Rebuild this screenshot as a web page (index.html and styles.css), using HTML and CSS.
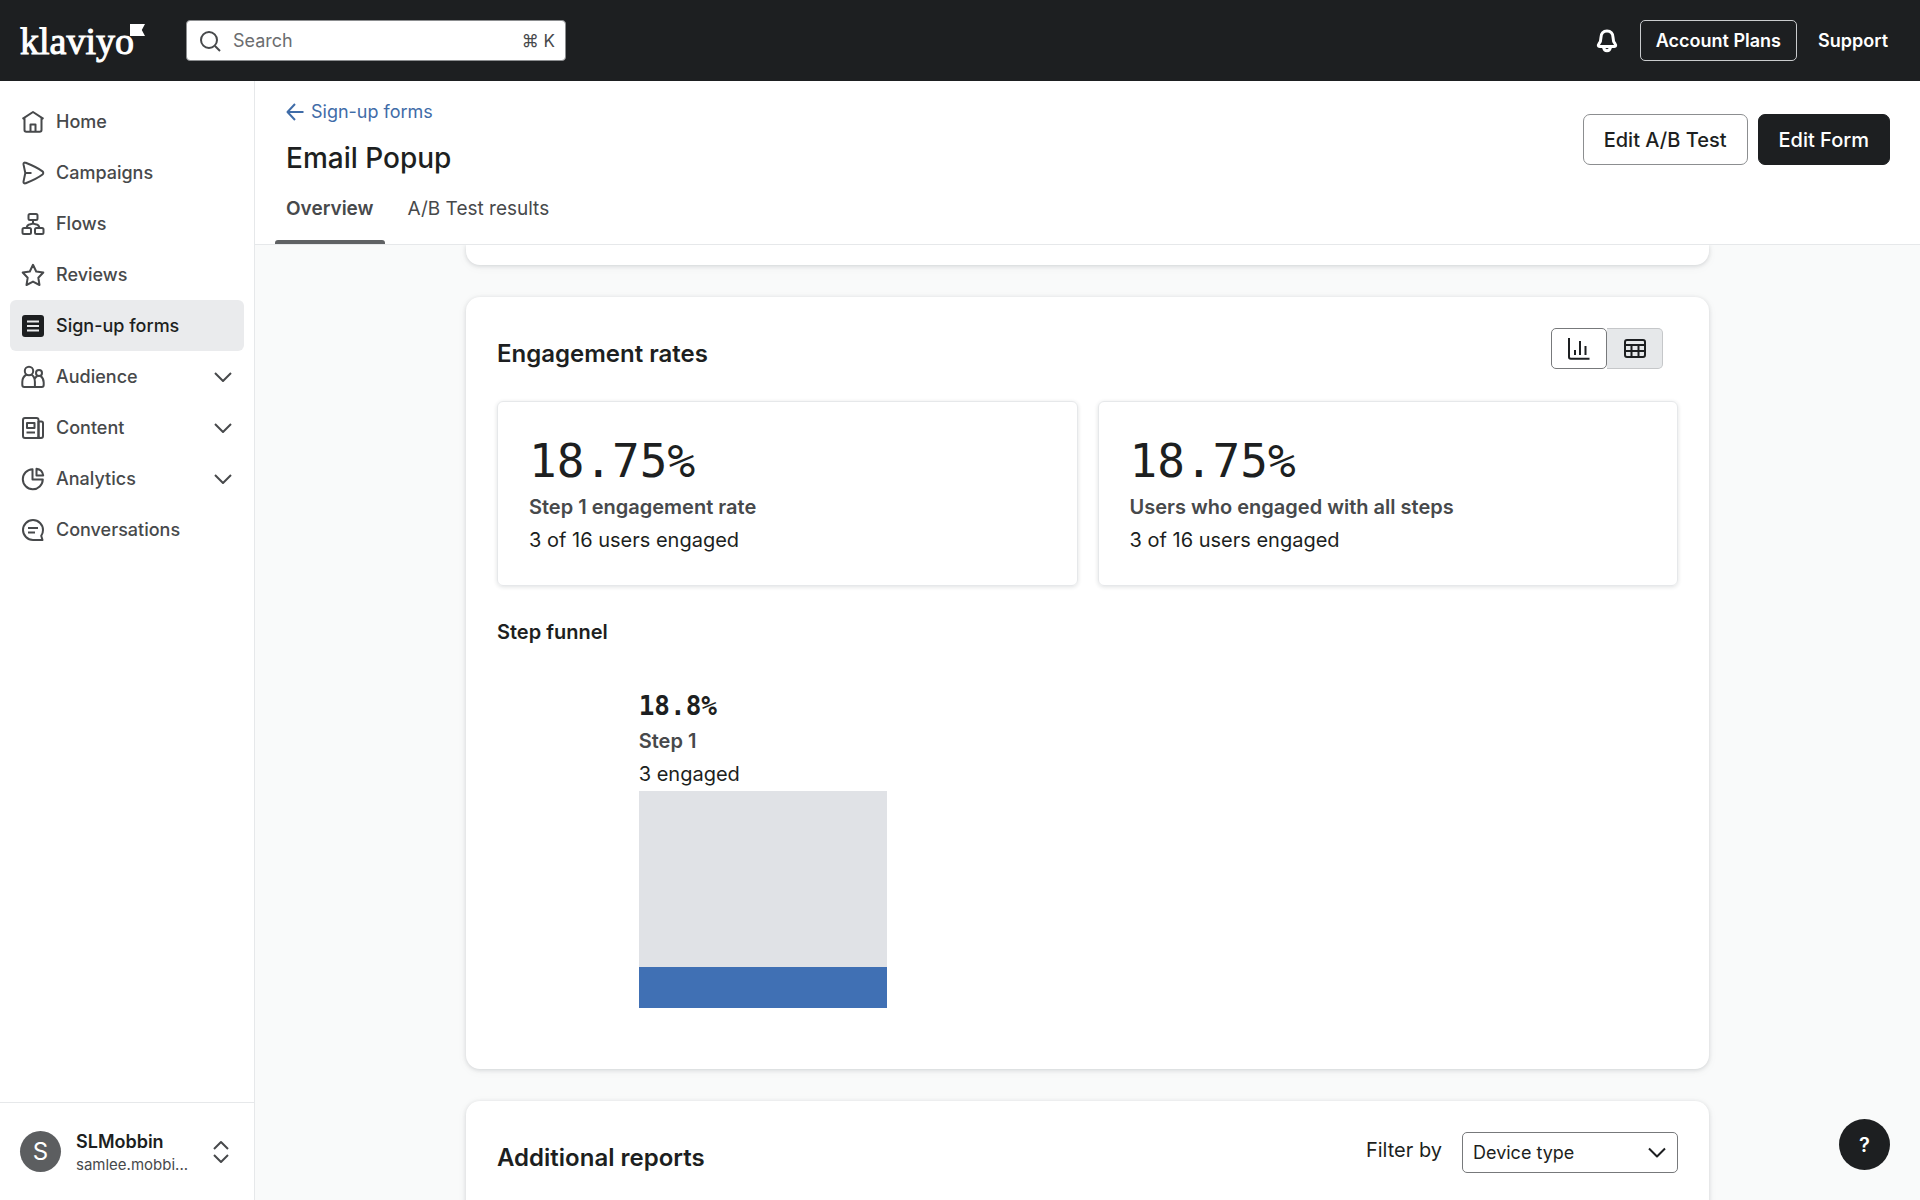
FILE: index.html
```html
<!DOCTYPE html>
<html lang="en">
<head>
  <meta charset="UTF-8">
  <meta name="viewport" content="width=device-width, initial-scale=1">
  <title>Email Popup - Sign-up forms</title>
  <link rel="stylesheet" href="styles.css">
</head>
<body>
  <header class="topbar">
    <a href="#" class="logo">klaviyo<svg class="logo-flag" width="15" height="12" viewBox="0 0 15 12"><path d="M0 0h15l-3.200 6 3.200 6H0z" fill="currentColor"/></svg></a>
    <label class="search">
      <svg width="24" height="24" viewBox="0 0 24 24" class="icon"><circle cx="10" cy="11" r="8"/><path d="M16 17l5 5"/></svg>
      <input type="text" placeholder="Search" aria-label="Search">
      <span class="shortcut">⌘ K</span>
    </label>
    <div class="topbar-actions">
      <button class="bell" aria-label="Notifications">
        <svg width="24" height="24" viewBox="0 0 24 24" class="icon"><path d="M12 2c-3.800 0-6 2.700-6 6.200 0 4-.8 5.300-2.200 6.900-.9 1.100-.5 2.400.8 2.400h14.800c1.300 0 1.700-1.300.8-2.400-1.400-1.600-2.200-2.900-2.200-6.900C18 4.700 15.800 2 12 2z"/><path d="M8.500 18c.3 2.400 1.600 3.800 3.500 3.800s3.200-1.400 3.500-3.800"/></svg>
      </button>
      <button class="plans">Account Plans</button>
      <a href="#" class="support">Support</a>
    </div>
  </header>

  <div class="layout">
    <aside class="sidebar">
      <nav>
        <a href="#" class="nav-item">
          <svg width="24" height="24" viewBox="0 0 24 24" class="icon"><path d="M1.500 8.800L12 2l10.500 6.800M3.500 8v12c0 1.100.7 1.800 1.800 1.800h13.400c1.100 0 1.800-.7 1.800-1.800V8M9.500 21.500v-7h5v7"/></svg>
          <span>Home</span>
        </a>
        <a href="#" class="nav-item">
          <svg width="24" height="24" viewBox="0 0 24 24" class="icon"><path d="M2.500 3.400c-.2-1.300 1-2.200 2.200-1.600 6.100 2.400 12 5 16.800 8.600 1 .8 1 2.300 0 3.100-4.800 3.700-10.700 6.300-16.800 8.700-1.200.6-2.400-.3-2.200-1.600L4.300 12zM4.300 12h6.200"/></svg>
          <span>Campaigns</span>
        </a>
        <a href="#" class="nav-item">
          <svg width="24" height="24" viewBox="0 0 24 24" class="icon"><rect x="7.500" y="2" width="9" height="6" rx="1.500"/><rect x="1.500" y="16" width="8.500" height="6" rx="1.500"/><rect x="14" y="16" width="8.500" height="6" rx="1.500"/><path d="M12 8v2.500M5.700 16c0-5.500 6.300-2.500 6.300-5.500 0 3 6.300 0 6.300 5.500"/></svg>
          <span>Flows</span>
        </a>
        <a href="#" class="nav-item">
          <svg width="24" height="24" viewBox="0 0 24 24" class="icon"><path d="M12 1.800l3.200 6.700 7.100 1-5 5.200 1.200 7.300-6.500-3.400L5.500 22l1.200-7.300-5-5.200 7.100-1z"/></svg>
          <span>Reviews</span>
        </a>
        <a href="#" class="nav-item active">
          <svg width="24" height="24" viewBox="0 0 24 24"><rect x="1" y="1" width="22" height="22" rx="3" fill="#1d1f21"/><path d="M6 7.500h12M6 12h12M6 16.500h12" stroke="#eaebed" stroke-width="2"/></svg>
          <span>Sign-up forms</span>
        </a>
        <a href="#" class="nav-item">
          <svg width="24" height="24" viewBox="0 0 24 24" class="icon"><circle cx="8" cy="6" r="4.200"/><circle cx="18" cy="8" r="3"/><path d="M5.600 9.500C2.800 11 1.300 13.500 1.300 17v3c0 1.200.8 2 2 2h17.400c1.200 0 2-.8 2-2v-2.500c0-2.800-1-5-3.200-6.600M10.400 9.500c2.500 1.600 3.500 4 3.500 7.500v5M16.400 10.900c-1.300.8-2.200 1.800-2.700 2.900"/></svg>
          <span>Audience</span>
          <svg width="18" height="10" viewBox="0 0 18 10" class="icon chevron"><path d="M1 1l8 8 8-8"/></svg>
        </a>
        <a href="#" class="nav-item">
          <svg width="24" height="24" viewBox="0 0 24 24" class="icon"><rect x="2" y="2" width="15.500" height="20" rx="2"/><path d="M17.500 5.500h2.800c1 0 1.700.7 1.700 1.700V20c0 1.200-.8 2-2 2h-4M17.500 5v15c0 1.200.8 2 2 2"/><path d="M6 7h7.500v5H6zM5.500 16.500h8.500"/></svg>
          <span>Content</span>
          <svg width="18" height="10" viewBox="0 0 18 10" class="icon chevron"><path d="M1 1l8 8 8-8"/></svg>
        </a>
        <a href="#" class="nav-item">
          <svg width="24" height="24" viewBox="0 0 24 24" class="icon"><path d="M11.500 2.200A10 10 0 1 0 21.800 12.500H11.500z"/><path d="M15.500 1.800c3.600.5 6.200 3.100 6.700 6.700h-6.700z"/></svg>
          <span>Analytics</span>
          <svg width="18" height="10" viewBox="0 0 18 10" class="icon chevron"><path d="M1 1l8 8 8-8"/></svg>
        </a>
        <a href="#" class="nav-item">
          <svg width="24" height="24" viewBox="0 0 24 24" class="icon"><path d="M12 22A10 10 0 1 1 22 12c0 2.300-.6 4.200-1.800 5.800l1.300 4.200zM7 10h10M7 14.500h7"/></svg>
          <span>Conversations</span>
        </a>
      </nav>
      <button class="account">
        <span class="avatar">S</span>
        <span class="account-text">
          <span class="account-name">SLMobbin</span>
          <span class="account-email">samlee.mobbi...</span>
        </span>
        <svg width="16" height="24" viewBox="0 0 16 24" class="icon"><path d="M1 9l7-7 7 7M1 15l7 7 7-7"/></svg>
      </button>
    </aside>

    <main>
      <div class="page-header">
        <div class="page-title">
          <a href="#" class="back-link">
            <svg width="18" height="18" viewBox="0 0 18 18" class="icon"><path d="M17.500 9H1.500M9 1L1.500 9 9 17"/></svg>
            Sign-up forms
          </a>
          <h1>Email Popup</h1>
          <div class="tabs">
            <a href="#" class="tab selected">Overview</a>
            <a href="#" class="tab">A/B Test results</a>
          </div>
        </div>
        <div class="page-actions">
          <button class="btn">Edit A/B Test</button>
          <button class="btn btn-dark">Edit Form</button>
        </div>
      </div>

      <div class="content">
        <section class="card card-previous"></section>

        <section class="card">
          <div class="card-head">
            <h2>Engagement rates</h2>
            <div class="view-toggle">
              <button class="on" aria-label="Chart view">
                <svg width="24" height="24" viewBox="0 0 24 24" class="icon"><path d="M2 1v19c0 1.100.7 1.800 1.800 1.800h18.700M8 13v5M13 4v14M18.500 9v9"/></svg>
              </button>
              <button aria-label="Table view">
                <svg width="24" height="24" viewBox="0 0 24 24" class="icon"><rect x="2" y="3" width="20" height="17" rx="2"/><path d="M2 8h20M2 14h20M8.500 8v12M15.500 8v12"/></svg>
              </button>
            </div>
          </div>
          <div class="metrics">
            <div class="metric">
              <div class="metric-value">18.75%</div>
              <div class="metric-label">Step 1 engagement rate</div>
              <div class="metric-note">3 of 16 users engaged</div>
            </div>
            <div class="metric">
              <div class="metric-value">18.75%</div>
              <div class="metric-label">Users who engaged with all steps</div>
              <div class="metric-note">3 of 16 users engaged</div>
            </div>
          </div>
          <h3>Step funnel</h3>
          <div class="funnel">
            <div class="funnel-step">
              <div class="funnel-value">18.8%</div>
              <div class="metric-label">Step 1</div>
              <div class="metric-note">3 engaged</div>
              <div class="bar"><div class="bar-fill" style="height: 18.75%"></div></div>
            </div>
          </div>
        </section>

        <section class="card card-reports">
          <div class="card-head">
            <h2>Additional reports</h2>
            <div class="filter">
              <label for="filterBy">Filter by</label>
              <div class="select">
                <select id="filterBy">
                  <option>Device type</option>
                </select>
                <svg width="18" height="11" viewBox="0 0 18 11" class="icon"><path d="M1 1.500l8 8 8-8"/></svg>
              </div>
            </div>
          </div>
        </section>
      </div>
    </main>
  </div>

  <button class="help" aria-label="Help">?</button>
</body>
</html>
```

FILE: styles.css
```css
:root {
  --dark: #1d1f21;
  --text: #1d1f21;
  --muted: #47494b;
  --border: #e6e8ea;
  --blue: #4070b4;
  --page-bg: #f9fafa;
  --mono: 'DejaVu Sans Mono', monospace;
}
* {
  box-sizing: border-box;
}
body {
  margin: 0;
  height: 100vh;
  display: flex;
  flex-direction: column;
  overflow: hidden;
  font-family: Inter, 'Liberation Sans', sans-serif;
  font-size: 20px;
  color: var(--text);
  background: #fff;
}
button, input, select {
  font-family: inherit;
  color: inherit;
}
button {
  cursor: pointer;
}
a {
  color: inherit;
  text-decoration: none;
}
h1, h2, h3 {
  margin: 0;
}
.icon {
  flex: none;
  fill: none;
  stroke: currentColor;
  stroke-width: 2;
  stroke-linejoin: round;
}

/* top bar */
.topbar {
  flex: none;
  height: 81px;
  display: flex;
  align-items: center;
  padding: 0 32px 0 20px;
  background: var(--dark);
  color: #fff;
}
.logo {
  position: relative;
  width: 166px;
  font-family: 'Liberation Serif', serif;
  font-size: 38px;
  line-height: 40px;
  -webkit-text-stroke: 1px #fff;
}
.logo-flag {
  position: absolute;
  top: 3px;
  left: 110px;
}
.search {
  width: 380px;
  height: 41px;
  display: flex;
  align-items: center;
  gap: 10px;
  padding: 0 10px 0 12px;
  border: 1px solid #8c8e90;
  border-radius: 4px;
  background: #fff;
  color: var(--muted);
}
.search input {
  flex: 1;
  min-width: 0;
  padding: 0;
  border: none;
  outline: none;
  background: none;
  font-size: 18px;
}
.search input::placeholder {
  color: #6b6d6f;
}
.shortcut {
  font-size: 17px;
}
.topbar-actions {
  margin-left: auto;
  display: flex;
  align-items: center;
  gap: 21px;
  font-size: 18px;
  font-weight: 600;
}
.bell {
  display: flex;
  padding: 0;
  border: none;
  background: none;
}
.bell .icon {
  stroke-width: 3;
}
.plans {
  height: 41px;
  padding: 0 15px;
  border: 1px solid #c9cbcd;
  border-radius: 5px;
  background: none;
  font-size: 18px;
  font-weight: 600;
}

/* sidebar */
.layout {
  flex: 1;
  min-height: 0;
  display: flex;
}
.sidebar {
  flex: none;
  width: 255px;
  display: flex;
  flex-direction: column;
  justify-content: space-between;
  border-right: 1px solid var(--border);
}
nav {
  padding: 15px 10px;
}
.nav-item {
  height: 51px;
  display: flex;
  align-items: center;
  gap: 11px;
  padding: 0 12px 0 11px;
  border-radius: 6px;
  font-size: 18px;
  font-weight: 500;
  color: var(--muted);
}
.nav-item.active {
  background: #eaebed;
  color: var(--text);
}
.chevron {
  margin-left: auto;
}
.account {
  height: 98px;
  display: flex;
  align-items: center;
  padding: 0 25px 0 20px;
  border: none;
  border-top: 1px solid var(--border);
  background: none;
  text-align: left;
  color: var(--muted);
}
.avatar {
  flex: none;
  width: 41px;
  height: 41px;
  border-radius: 50%;
  background: #5c5e60;
  color: #fff;
  font-size: 24px;
  line-height: 41px;
  text-align: center;
}
.account-text {
  margin: 2px auto 0 15px;
}
.account-name, .account-email {
  display: block;
  white-space: nowrap;
  line-height: 23px;
}
.account-name {
  font-size: 18px;
  font-weight: 600;
  color: var(--text);
}
.account-email {
  font-size: 15px;
}

/* page header */
main {
  flex: 1;
  min-width: 0;
  display: flex;
  flex-direction: column;
}
.page-header {
  flex: none;
  display: flex;
  justify-content: space-between;
  padding: 19px 30px 0 31px;
  border-bottom: 1px solid var(--border);
}
.back-link {
  display: flex;
  align-items: center;
  gap: 7px;
  font-size: 18px;
  line-height: 24px;
  color: #3f6ca8;
}
h1 {
  margin-top: 16px;
  font-size: 28px;
  font-weight: 500;
  line-height: 36px;
}
.tabs {
  display: flex;
  gap: 12px;
  margin: 14px 0 0 -11px;
}
.tab {
  height: 54px;
  padding: 4px 11px 0;
  font-size: 19px;
  line-height: 30px;
  color: var(--muted);
}
.tab.selected {
  position: relative;
  font-weight: 600;
}
.tab.selected::after {
  content: '';
  position: absolute;
  left: 0;
  right: 0;
  bottom: 0;
  height: 4px;
  border-radius: 3px 3px 0 0;
  background: #606264;
}
.page-actions {
  display: flex;
  gap: 10px;
  padding-top: 14px;
}
.btn {
  height: 51px;
  padding: 0 20px;
  border: 1px solid #8c8e90;
  border-radius: 7px;
  background: #fff;
  font-size: 20px;
  font-weight: 500;
}
.btn-dark {
  border-color: var(--dark);
  background: var(--dark);
  color: #fff;
}

/* cards */
.content {
  flex: 1;
  min-height: 0;
  display: flex;
  flex-direction: column;
  align-items: center;
  gap: 32px;
  padding: 0 30px;
  overflow: hidden;
  background: var(--page-bg);
}
.card {
  flex: none;
  width: 100%;
  max-width: 1243px;
  padding: 31px;
  border-radius: 14px;
  background: #fff;
  box-shadow: 0 1px 4px rgba(29, 40, 50, 0.16), 0 2px 12px rgba(29, 40, 50, 0.04);
}
.card-previous {
  height: 20px;
  padding: 0;
  border-radius: 0 0 14px 14px;
}
.card-reports {
  padding-bottom: 80px;
}
.card-head {
  display: flex;
  justify-content: space-between;
}
h2 {
  padding-top: 11px;
  font-size: 24px;
  font-weight: 600;
  line-height: 30px;
}
.view-toggle {
  display: flex;
  height: 41px;
  margin-right: 15px;
}
.view-toggle button {
  width: 56px;
  display: flex;
  align-items: center;
  justify-content: center;
  padding: 0;
  border: 1px solid #c5c7c9;
  border-left: none;
  border-radius: 0 5px 5px 0;
  background: #e6e8ea;
}
.view-toggle button.on {
  border: 1px solid #77797b;
  border-radius: 5px;
  background: #fff;
}
.metrics {
  display: grid;
  grid-template-columns: 1fr 1fr;
  gap: 20px;
  margin-top: 32px;
}
.metric {
  padding: 30px 31px 28px;
  border: 1px solid var(--border);
  border-radius: 6px;
  box-shadow: 0 1px 4px rgba(29, 40, 50, 0.14);
}
.metric-value {
  font-family: var(--mono);
  font-size: 46px;
  line-height: 59px;
}
.metric-label {
  line-height: 33px;
  font-weight: 600;
  color: var(--muted);
}
.metric-note {
  line-height: 33px;
}
h3 {
  margin-top: 30px;
  font-size: 20px;
  font-weight: 600;
  line-height: 32px;
}
.funnel {
  padding: 40px 0 30px 12%;
}
.funnel-step {
  width: 248px;
}
.funnel-value {
  font-family: var(--mono);
  font-size: 26px;
  font-weight: 700;
  line-height: 37px;
}
.bar {
  height: 217px;
  display: flex;
  align-items: flex-end;
  background: #e0e2e6;
}
.bar-fill {
  width: 100%;
  background: var(--blue);
}

/* report filter */
.filter {
  display: flex;
  gap: 20px;
}
.filter label {
  line-height: 37px;
}
.select {
  position: relative;
  width: 216px;
}
.select select {
  width: 100%;
  height: 41px;
  padding: 0 10px;
  appearance: none;
  border: 1px solid #77797b;
  border-radius: 5px;
  background: #fff;
  font-size: 18px;
}
.select .icon {
  position: absolute;
  top: 15px;
  right: 12px;
  pointer-events: none;
}

.help {
  position: fixed;
  right: 30px;
  bottom: 30px;
  width: 51px;
  height: 51px;
  border: none;
  border-radius: 50%;
  background: var(--dark);
  color: #fff;
  font-size: 20px;
  font-weight: 600;
}
```
